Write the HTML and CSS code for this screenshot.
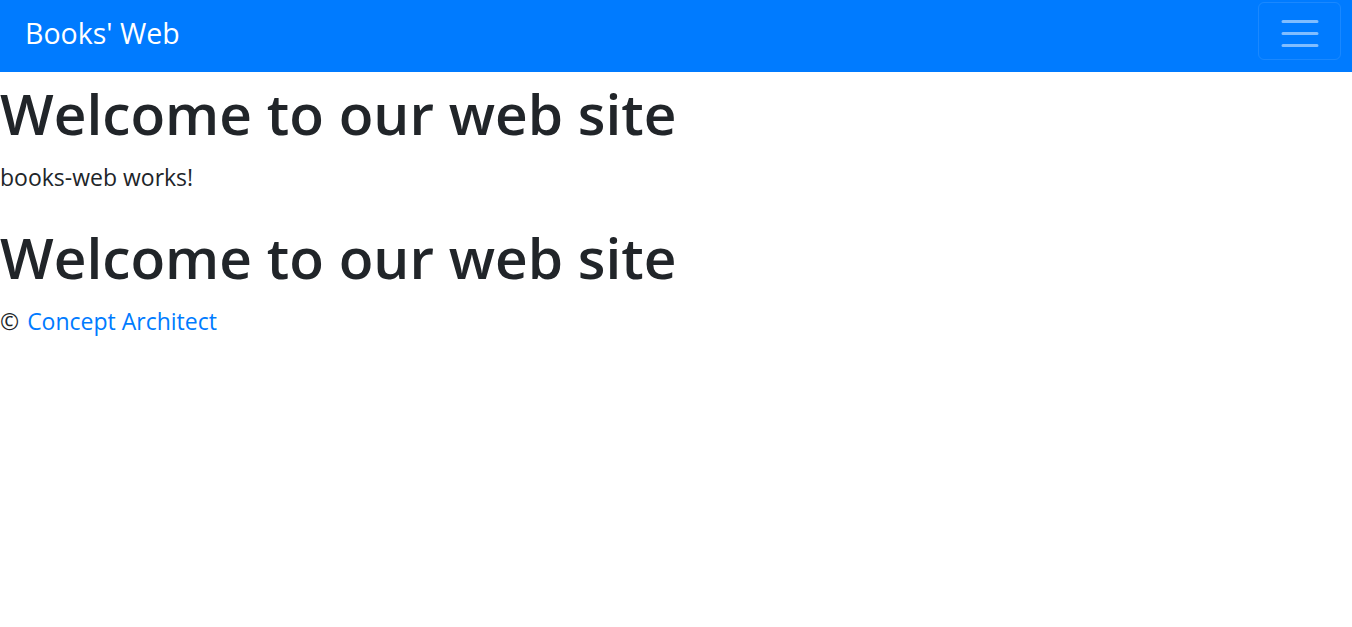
FILE: index.html
```html
<!DOCTYPE html>
<html lang="en">
<head>
<meta charset="utf-8">
<title>Books' Web</title>
<link rel="stylesheet" href="styles.css">
</head>
<body>
<nav class="navbar">
  <a class="brand" href="#">Books' Web</a>
  <button class="toggler" type="button" aria-label="Toggle navigation">
    <svg class="toggler-icon" width="83" height="58" viewBox="0 0 83 58">
      <path d="M25 19.5h34M25 31.5h34M25 43.5h34" stroke="rgba(255,255,255,0.5)" stroke-width="3" stroke-linecap="round" fill="none"/>
    </svg>
  </button>
</nav>
<main class="content">
  <h1 class="title">Welcome to our web site</h1>
  <p class="text">books-web works!</p>
  <h1 class="title">Welcome to our web site</h1>
  <p class="text">© <a class="link" href="#">Concept Architect</a></p>
</main>
</body>
</html>
```

FILE: styles.css
```css
html, body {
  margin: 0;
  padding: 0;
}
body {
  font-family: "Open Sans", "Noto Sans", Arial, sans-serif;
  font-size: 23px;
  line-height: 36px;
  color: #212529;
  background: #fff;
}
.navbar {
  display: flex;
  justify-content: space-between;
  align-items: flex-start;
  height: 72px;
  box-sizing: border-box;
  padding: 2px 11px 0 24px;
  background: #007bff;
}
.brand {
  margin-top: 9px;
  margin-left: 1px;
  font-size: 28.5px;
  line-height: 45px;
  color: #fff;
  text-decoration: none;
}
.toggler {
  width: 83px;
  height: 58px;
  padding: 0;
  margin: 0;
  box-sizing: border-box;
  border: 1px solid rgba(255,255,255,0.1);
  border-radius: 6px;
  background: transparent;
  position: relative;
}
.toggler-icon {
  position: absolute;
  left: -1px;
  top: -1px;
  display: block;
}
.content {
  display: block;
  padding-top: 3px;
}
.title {
  margin: 0 0 12px 0;
  font-size: 56.8px;
  font-weight: 600;
  line-height: 72px;
  padding-top: 2px;
  height: 70px;
}
.text {
  margin: 0 0 24px 0;
}
.link {
  margin-left: 2px;
  color: #007bff;
  text-decoration: none;
}
```
